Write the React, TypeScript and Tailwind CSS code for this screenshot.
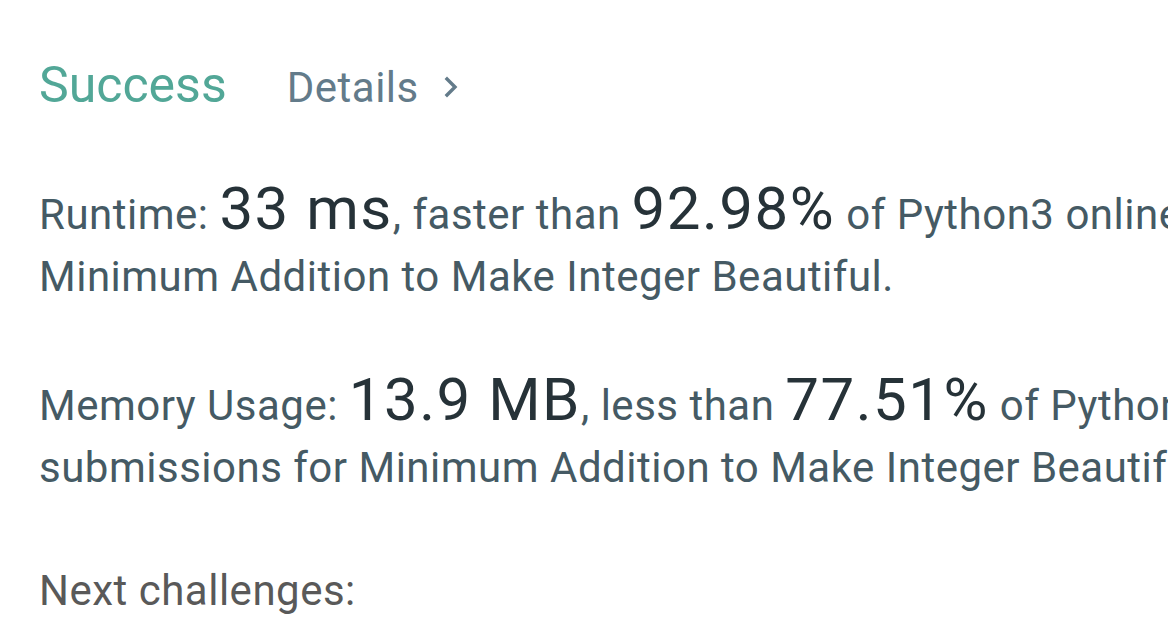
// 제출 결과 패널

const font = { fontFamily: "Roboto, 'Noto Sans', sans-serif" };

function Big({ children }: { children: React.ReactNode }) {
  return (
    <span className="text-[60px] leading-none tracking-[1.5px] text-[#263238]">{children}</span>
  );
}

export default function App() {
  return (
    <div
      className="h-[642px] w-[1168px] overflow-hidden bg-white pl-[39px] text-[42px] leading-[62px] tracking-[0.5px] text-[#455a64]"
      style={font}
    >
      {/* 헤더: 결과 + 상세 링크 */}
      <div className="flex items-baseline pt-[54px]">
        <span className="text-[50px] tracking-normal text-[#52a797]">Success</span>
        <span className="ml-[60px] text-[#637b8a]">Details</span>
        <svg
          className="ml-[24px] self-center"
          width="16"
          height="24"
          viewBox="0 0 16 24"
          fill="none"
          stroke="#637b8a"
          strokeWidth="3.4"
          strokeLinecap="square"
        >
          <path d="M4 4 L12 12 L4 20" />
        </svg>
      </div>

      {/* 실행 시간 */}
      <p className="mt-[60px] whitespace-nowrap">
        Runtime: <Big>33 ms</Big>, faster than <Big>92.98%</Big> of Python3 online submissions for
        <br />
        Minimum Addition to Make Integer Beautiful.
      </p>

      {/* 메모리 사용량 */}
      <p className="mt-[62px] whitespace-nowrap">
        Memory Usage: <Big>13.9 MB</Big>, less than <Big>77.51%</Big> of Python3 online
        <br />
        submissions for Minimum Addition to Make Integer Beautiful.
      </p>

      <p className="mt-[61px] text-[#595959]">Next challenges:</p>
    </div>
  );
}
